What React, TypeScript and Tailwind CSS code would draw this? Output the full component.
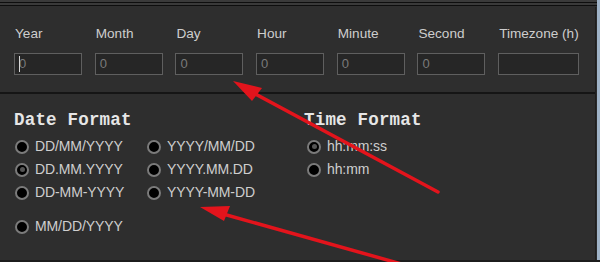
const fields = ["Year", "Month", "Day", "Hour", "Minute", "Second", "Timezone (h)"];

function Radio({ label, checked }: { label: string; checked?: boolean }) {
  return (
    <label className="flex items-center gap-[6px] h-[23px]">
      <span className="w-[14px] h-[14px] rounded-full border-2 border-[#7b7b7b] bg-black flex items-center justify-center">
        {checked && <span className="w-[5px] h-[5px] rounded-full bg-[#555]" />}
      </span>
      <span className="text-[14px] text-[#cfcfcf] tracking-[-0.1px]">{label}</span>
    </label>
  );
}

export default function App() {
  return (
    <div className="relative w-[600px] h-[262px] bg-[#2e2e2e] overflow-hidden font-['Liberation_Sans',Arial,sans-serif]">
      {/* window chrome lines */}
      <div className="h-[7px] border-t-[2px] border-t-[#3a3a3a]">
        <div className="h-[1px] bg-[#0e0e0e]" />
        <div className="h-[2px] bg-[#3a3a3a]" />
        <div className="h-[1px] bg-[#0e0e0e]" />
      </div>

      <div className="flex">
        <div className="flex-1">
          {/* date/time fields */}
          <div className="flex gap-[12.7px] pl-[14px] pt-[18px] h-[85px]">
            {fields.map((f) => (
              <div key={f} className="flex flex-col">
                <div className="text-[13.6px] text-[#cdcdcd] h-[28px] leading-[18px] whitespace-nowrap pl-[1px]">{f}</div>
                <div
                  className={`relative h-[22px] border border-[#5f5f5f] bg-[#262626] text-[13px] text-[#7a7a7a] leading-[20px] pl-[4px] ${
                    f === "Timezone (h)" ? "w-[81px]" : "w-[68px]"
                  }`}
                >
                  {f === "Timezone (h)" ? "" : "0"}
                  {f === "Year" && <span className="absolute left-[4px] top-[2px] w-[1px] h-[16px] bg-[#d8d8d8]" />}
                </div>
              </div>
            ))}
          </div>

          <div className="h-[2px] bg-[#151515]" />

          {/* formats */}
          <div className="flex pl-[14px] pt-[16px]">
            <div className="w-[290px]">
              <div className="font-['Liberation_Mono',monospace] font-bold text-[17.5px] text-[#e6e6e6] leading-[20px] mb-[5px] tracking-[0.2px]">
                Date Format
              </div>
              <div className="flex pl-[1px]">
                <div className="w-[132px] flex flex-col">
                  <Radio label="DD/MM/YYYY" />
                  <Radio label="DD.MM.YYYY" checked />
                  <Radio label="DD-MM-YYYY" />
                  <div className="mt-[11px]">
                    <Radio label="MM/DD/YYYY" />
                  </div>
                </div>
                <div className="flex flex-col">
                  <Radio label="YYYY/MM/DD" />
                  <Radio label="YYYY.MM.DD" />
                  <Radio label="YYYY-MM-DD" />
                </div>
              </div>
            </div>
            <div>
              <div className="font-['Liberation_Mono',monospace] font-bold text-[17.5px] text-[#e6e6e6] leading-[20px] mb-[5px] tracking-[0.2px]">
                Time Format
              </div>
              <div className="flex flex-col pl-[3px]">
                <Radio label="hh:mm:ss" checked />
                <Radio label="hh:mm" />
              </div>
            </div>
          </div>
        </div>

        {/* right window edge */}
        <div className="w-[5px] h-[255px] bg-[#2a2a2a] border-l border-[#1e1e1e]" />
      </div>
      <div className="absolute right-0 top-0 w-[3px] h-full bg-[#9fb3c8]" />
      <div className="absolute left-0 bottom-0 w-full h-[2px] bg-[#1c1c1c]" />

      {/* red annotation arrows */}
      <svg className="absolute inset-0 pointer-events-none" width="600" height="262" viewBox="0 0 600 262">
        <line x1="438" y1="192" x2="248" y2="90" stroke="#e3141c" strokeWidth="3.5" strokeLinecap="round" />
        <polygon points="233,81 262,88 252,101" fill="#e3141c" />
        <line x1="430" y1="272" x2="216" y2="212" stroke="#e3141c" strokeWidth="3.5" strokeLinecap="round" />
        <polygon points="200,207 230,206 224,221" fill="#e3141c" />
      </svg>
    </div>
  );
}
